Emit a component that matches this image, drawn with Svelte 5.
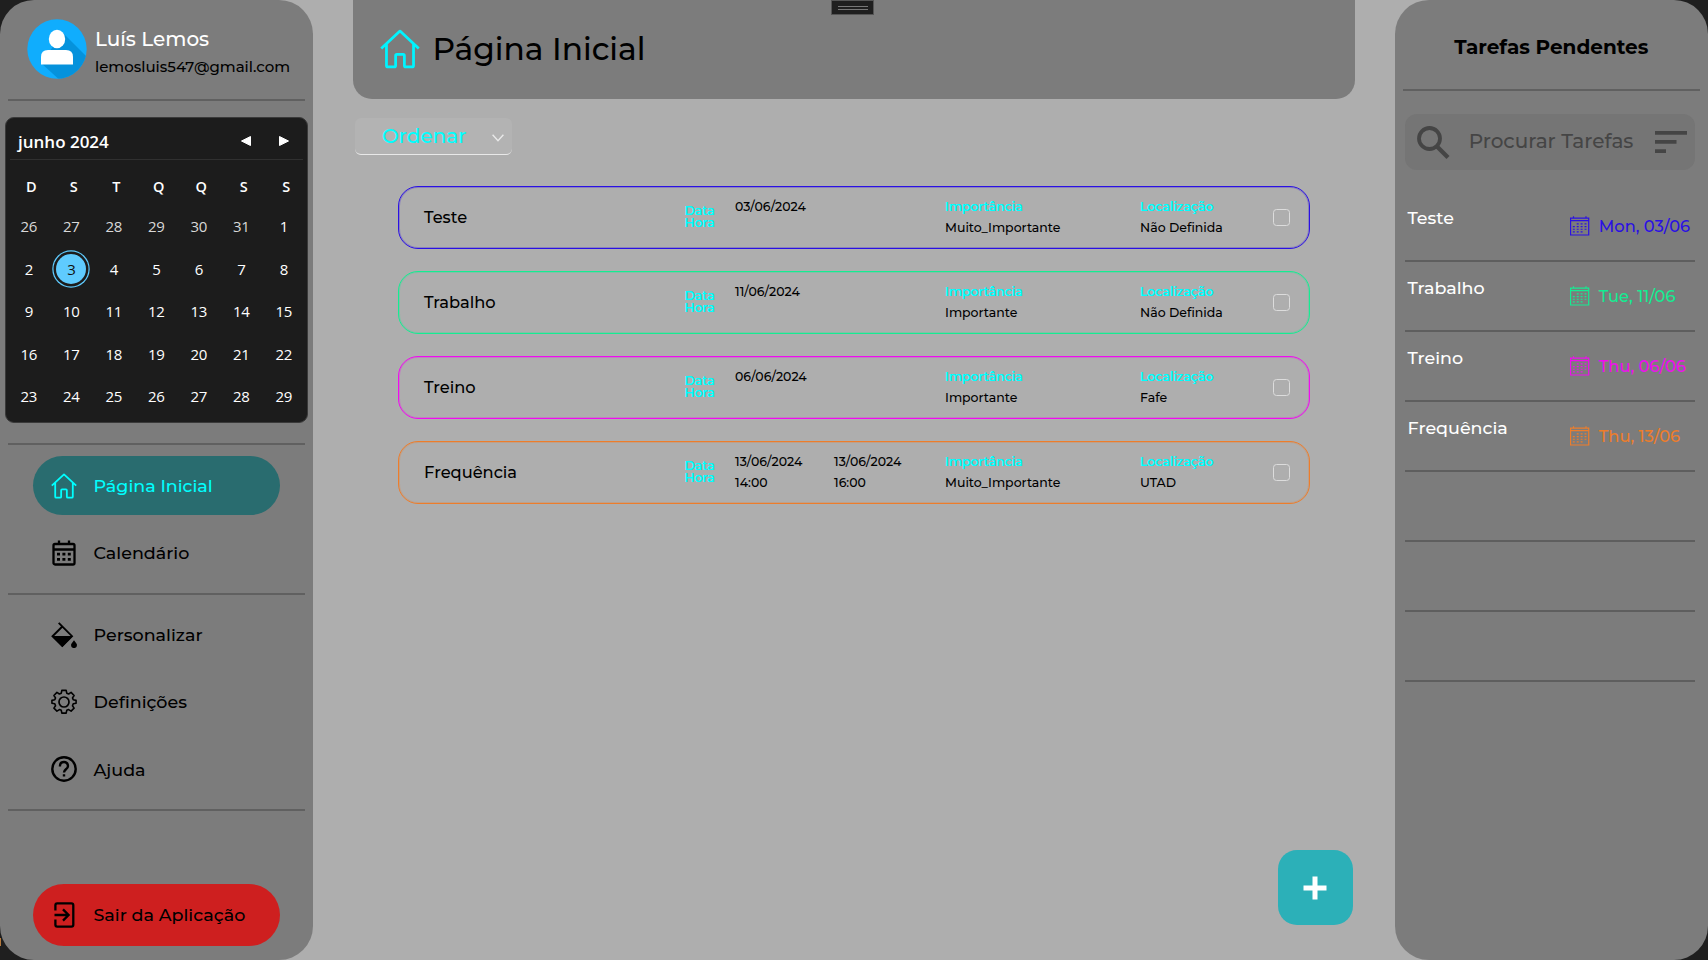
<script>
  const weekdays = ['D', 'S', 'T', 'Q', 'Q', 'S', 'S'];
  const days = [26, 27, 28, 29, 30, 31, 1, ...Array.from({ length: 28 }, (_, i) => i + 2)];
  const tasks = [
    { name: 'Teste', color: '#2a10e4', start: '03/06/2024', level: 'Muito_Importante', place: 'Não Definida', due: 'Mon, 03/06' },
    { name: 'Trabalho', color: '#14ec92', start: '11/06/2024', level: 'Importante', place: 'Não Definida', due: 'Tue, 11/06' },
    { name: 'Treino', color: '#f00cf0', start: '06/06/2024', level: 'Importante', place: 'Fafe', due: 'Thu, 06/06' },
    { name: 'Frequência', color: '#ed7d2b', start: '13/06/2024', startTime: '14:00', end: '13/06/2024', endTime: '16:00', level: 'Muito_Importante', place: 'UTAD', due: 'Thu, 13/06' }
  ];
  const emptyRows = [1, 2, 3];
</script>

{#snippet home()}
  <svg class="home" viewBox="0 0 42 42" fill="none" stroke="currentColor" stroke-width="2.9" stroke-linejoin="round">
    <path d="M1.3 20.5 21 2.2l19.7 18.3M6.8 16v22.2q0 1.6 1.6 1.6h6.4q1.6 0 1.6-1.6V28q0-1.4 1.4-1.4h6.4q1.4 0 1.4 1.4v10.2q0 1.6 1.6 1.6h6.4q1.6 0 1.6-1.6V16" />
  </svg>
{/snippet}

<div class="app">
  <aside class="side">
    <div class="profile">
      <svg class="avatar" viewBox="0 0 60 60">
        <defs><clipPath id="disc"><circle cx="30" cy="30" r="29.7" /></clipPath></defs>
        <g clip-path="url(#disc)">
          <rect width="60" height="60" fill="#10adfd" />
          <path d="M36 14 64 42V64H36L14 44Z" fill="#0592dc" />
        </g>
        <ellipse cx="30" cy="20" rx="8.200" ry="9.200" fill="#fff" />
        <path d="M14 45.500V38q0-7 7-7h18q7 0 7 7v7.500Z" fill="#fff" />
      </svg>
      <div class="who">
        <div class="user">Luís Lemos</div>
        <div class="mail">lemosluis547@gmail.com</div>
      </div>
    </div>
    <hr />
    <section class="cal">
      <header>
        <span class="month">junho 2024</span>
        <svg class="arrows" viewBox="0 0 50 12" fill="#fff" stroke="#fff" stroke-linejoin="round"><path d="M1.500 6 10.500 1.500V10.500ZM48.500 6 39.500 1.500V10.500Z" /></svg>
      </header>
      <div class="week">{#each weekdays as d}<span>{d}</span>{/each}</div>
      <div class="days">
        {#each days as d, i}
          <span class:dim={i < 6} class:today={i === 8}><b>{d}</b></span>
        {/each}
      </div>
    </section>
    <hr />
    <nav>
      <div class="item active">{@render home()}<span>Página Inicial</span></div>
      <div class="item second">
        <svg viewBox="0 0 26 26" fill="none" stroke="currentColor" stroke-width="2.300">
          <rect x="2.500" y="4" width="21" height="20.500" rx="1.500" /><path d="M2.500 9.500h21M8 .5V4M18 .5V4" />
          <path stroke-width="2.800" d="M6 14.200h3m2.400 0h3m2.400 0h3M6 19.300h3m2.400 0h3m2.400 0h3" />
        </svg><span>Calendário</span>
      </div>
    </nav>
    <hr />
    <nav class="tools">
      <div class="item">
        <svg viewBox="0 0 26 26" fill="none" stroke="currentColor" stroke-width="1.900">
          <path d="M7.700.8 21 14.200 11.300 24 1.500 14.200 11.300 4.500" /><path fill="currentColor" stroke="none" d="M1.200 14h20.300L11.300 25ZM23 18.300q3 3.700 3 4.800a3 3 0 0 1-6 0q0-1.100 3-4.800" />
        </svg><span>Personalizar</span>
      </div>
      <div class="item">
        <svg viewBox="0 0 26 26" fill="none" stroke="currentColor" stroke-width="1.700" stroke-linejoin="round">
          <circle cx="13" cy="13" r="5" />
          <path d="M10.700.9h4.600l.6 3 2 .9 2.600-1.700 3.200 3.300-1.700 2.500.8 2 3 .6v3.100l-3 .6-.8 2.100 1.700 2.500-3.200 3.200-2.600-1.700-2 .8-.6 3h-4.600l-.6-3-2-.8L5.500 23l-3.200-3.200L4 17.300l-.8-2.100-3-.6v-3.100l3-.6.8-2-1.700-2.500 3.200-3.300 2.600 1.700 2-.9Z" transform="translate(.75 .5) scale(.943)" />
        </svg><span>Definições</span>
      </div>
      <div class="item">
        <svg viewBox="0 0 26 26" fill="none" stroke="currentColor" stroke-width="2.400">
          <circle cx="13" cy="13" r="11.700" /><path d="M8.900 10.400C8.900 4.600 17 4.700 17 10c0 3.300-4 3.300-4 6.500M13 18.200v2.400" />
        </svg><span>Ajuda</span>
      </div>
    </nav>
    <hr />
    <div class="item exit">
      <svg viewBox="0 0 26 26" fill="none" stroke="currentColor" stroke-width="2.300">
        <path d="M4.400 8.500V3.200q0-1.800 1.800-1.800h14.300q1.800 0 1.800 1.800v19.600q0 1.800-1.800 1.800H6.200q-1.800 0-1.800-1.800v-5.300M3.500 13h14M12 7.400l5.600 5.600-5.600 5.600" />
      </svg><span>Sair da Aplicação</span>
    </div>
  </aside>

  <main>
    <header class="top">{@render home()}<h1>Página Inicial</h1></header>
    <div class="handle"><i></i></div>
    <div class="sort">
      <span>Ordenar</span>
      <svg viewBox="0 0 12 8" fill="none" stroke="#e9e9e9" stroke-width="1.400"><path d="M.6.8 6 6.800 11.400.8" /></svg>
    </div>
    <div class="list">
      {#each tasks as t}
        <article style:--tone={t.color}>
          <span class="name">{t.name}</span>
          <span class="when">Data<br />Hora</span>
          <span class="pair"><span>{t.start}</span><span>{t.startTime ?? ''}</span></span>
          <span class="pair"><span>{t.end ?? ''}</span><span>{t.endTime ?? ''}</span></span>
          <span class="pair"><em>Importância</em><span>{t.level}</span></span>
          <span class="pair"><em>Localização</em><span>{t.place}</span></span>
          <i class="box"></i>
        </article>
      {/each}
    </div>
    <div class="add"><svg viewBox="0 0 24 24" stroke="#fff" stroke-width="5"><path d="M.5 12h23M12 .5v23" /></svg></div>
  </main>

  <aside class="side">
    <h2>Tarefas Pendentes</h2>
    <hr />
    <div class="search">
      <svg class="lens" viewBox="0 0 33 33" fill="none" stroke="#454545" stroke-width="3.800"><circle cx="12.500" cy="12.500" r="10.500" /><path d="M20 20.500 31 31.500" stroke-width="4.200" /></svg>
      <span>Procurar Tarefas</span>
      <svg class="filter" viewBox="0 0 32 22" fill="#454545"><path d="M0 0h32v3.700H0zM0 9h21.500v3.700H0zM0 18.200h11v3.700H0z" /></svg>
    </div>
    {#each tasks as t}
      <div class="todo">
        <span class="what">{t.name}</span>
        <span class="due" style:color={t.color}>
          <svg viewBox="0 0 20 20" fill="none" stroke="currentColor" stroke-width="1.200">
            <path d="M.6 1.900h18.600v17.300H.6zM.6 4.500h18.600M3.600 0v2M16.400 0v2" />
            <path stroke-dasharray="2 2" d="M6.900 7.800h10M2.900 10.600h14M2.900 13.300h14M2.900 16h10" />
          </svg>{t.due}
        </span>
      </div>
    {/each}
    {#each emptyRows as r}<div class="todo"></div>{/each}
  </aside>
</div>

<style>
  :global(body) { background: #1f1f1f; }
  * { box-sizing: border-box; }
  .app {
    width: 1708px; height: 960px; display: grid; grid-template-columns: 312.5px 1082.5px 312.5px;
    background:
      linear-gradient(#b5793c, #b5793c) 0 938px / 1px 8px no-repeat,
      linear-gradient(90deg, #1f1f1f 160px, #aeaeae 160px 1550px, #1f1f1f 1550px);
    font-family: Montserrat, Inter, sans-serif; font-weight: 500; color: #000; overflow: hidden;
  }
  .side { height: 960px; background: #7c7c7c; border-radius: 34px; display: flex; flex-direction: column; }
  hr { flex: none; width: 297.500px; height: 2px; margin: 0 0 0 7.500px; border: 0; background: #606060; }
  svg { display: block; flex: none; }
  span { white-space: nowrap; }

  .profile { height: 99px; padding: 19px 0 0 27px; display: flex; gap: 8px; }
  .avatar { width: 60px; height: 60px; }
  .who { padding-top: 7px; }
  .user { font-size: 20px; line-height: 26px; color: #fff; }
  .mail { font-size: 15px; line-height: 29px; }

  .cal { height: 306px; margin: 16px 5px 20px 5px; border: 1px solid #3a3a3a; border-radius: 9px; background: #1c1c1c; color: #fff; font-family: "Open Sans", sans-serif; }
  .cal header { height: 42px; margin: 0 4px; padding: 4px 13px 0 8px; border-bottom: 1px solid #303030; display: flex; align-items: center; justify-content: space-between; }
  .month { font-size: 17px; font-weight: 600; padding-top: 2px; }
  .arrows { width: 50px; height: 12px; }
  .week, .days { display: grid; grid-template-columns: repeat(7, 42.500px); text-align: center; }
  .week { height: 45px; padding: 7px 0 0 4px; font-size: 14.500px; font-weight: 600; line-height: 40px; }
  .days { padding-left: 1.500px; grid-auto-rows: 42.500px; font-size: 15px; letter-spacing: -.4px; }
  .days span { display: grid; place-items: center; }
  .days b { font-weight: 400; line-height: 30px; }
  .days .dim { color: #d8d8d8; }
  .today b { width: 30px; height: 30px; border-radius: 50%; background: #5fcbfe; color: #111; box-shadow: 0 0 0 2.500px #1c1c1c, 0 0 0 3.700px #5fcbfe; }

  nav { height: 148px; padding-top: 11px; }
  .item { width: 247.500px; height: 59px; margin-left: 32.500px; padding-left: 18px; border-radius: 30px; display: flex; align-items: center; gap: 17px; font-size: 17.500px; }
  .item svg { width: 26px; height: 26px; }
  .active { background: #296c6f; color: #0ff; }
  .second { margin-top: 8px; }
  .tools { height: 214px; padding-top: 10px; display: flex; flex-direction: column; gap: 8.400px; }
  .exit { height: 62px; margin-top: 73px; background: #ce1f1f; border-radius: 31px; flex: none; }
  .exit span { padding-bottom: 1px; }

  main { position: relative; display: flex; flex-direction: column; padding: 0 40px; }
  .top { height: 98.500px; flex: none; background: #7c7c7c; border-radius: 0 0 19px 19px; display: flex; align-items: center; padding: 0 0 1px 26.500px; gap: 11.500px; }
  .top .home { width: 42px; height: 40px; color: #00f4ff; }
  h1 { margin: 0; font-size: 31.250px; font-weight: 500; }
  .handle { position: absolute; left: 518.500px; top: 0; width: 43px; height: 15px; background: #1f1f1f; border: 1px solid #555; display: grid; place-items: center; }
  .handle i { width: 30px; height: 4px; border: solid #777; border-width: 1px 0; }
  .sort { flex: none; width: 157px; height: 37px; margin: 19.500px 0 0 2.500px; padding: 0 8px 0 27px; border-radius: 6px; border-bottom: 1px solid #e8e8e8; background: #b3b3b3; display: flex; align-items: center; justify-content: space-between; color: #0ff; font-size: 20px; }
  .sort svg { width: 12px; height: 8px; margin-top: 4px; }
  .list { padding: 31px 5px 0 45.500px; display: grid; gap: 22px; }
  article { width: 912px; height: 63px; border: 1px solid var(--tone); box-shadow: inset 0 0 0 1px color-mix(in srgb, var(--tone) 28%, transparent); border-radius: 20px; padding-left: 25px; display: grid; grid-template-columns: 260.500px 50.500px 99px 111px 195px 132.500px 17px; align-items: center; }
  .name { font-size: 16.250px; margin-top: -1px; }
  .when { font-size: 12.500px; line-height: 12px; margin-top: -1px; }
  .pair { display: grid; grid-template-rows: 21px 21px; line-height: 21px; font-size: 12.500px; margin-top: -1px; }
  em, .when { font-style: normal; color: #0ff; text-shadow: 0 0 .6px #0ff; }
  .box { width: 17px; height: 17px; border: 1px solid #dcdcdc; border-radius: 3.500px; }
  .add { width: 75px; height: 75px; margin: auto 2.500px 35px auto; border-radius: 19px; background: #2cb0b8; display: grid; place-items: center; }
  .add svg { width: 24px; height: 24px; }

  h2 { margin: 0; height: 89px; line-height: 94px; text-align: center; font-size: 20px; font-weight: 700; }
  .search { flex: none; width: 290px; height: 56px; margin: 23px 0 22px 10px; padding: 0 8px 0 12px; border-radius: 12px; background: #757575; display: flex; align-items: center; justify-content: space-between; color: #454545; font-size: 20px; }
  .search span { padding: 0 3px 2px 0; }
  .lens { width: 33px; height: 33px; }
  .filter { width: 32px; height: 22px; }
  .todo { flex: none; width: 290px; height: 70px; margin-left: 10px; border-bottom: 2px solid #5e5e5e; display: flex; justify-content: space-between; font-size: 17.500px; }
  .what { color: #fff; line-height: 20px; padding: 16px 0 0 2.500px; }
  .due { width: 125px; height: 20px; margin-top: 24px; display: flex; align-items: center; gap: 9.300px; font-size: 16.250px; }
  .due svg { width: 19.500px; height: 20px; }
</style>
